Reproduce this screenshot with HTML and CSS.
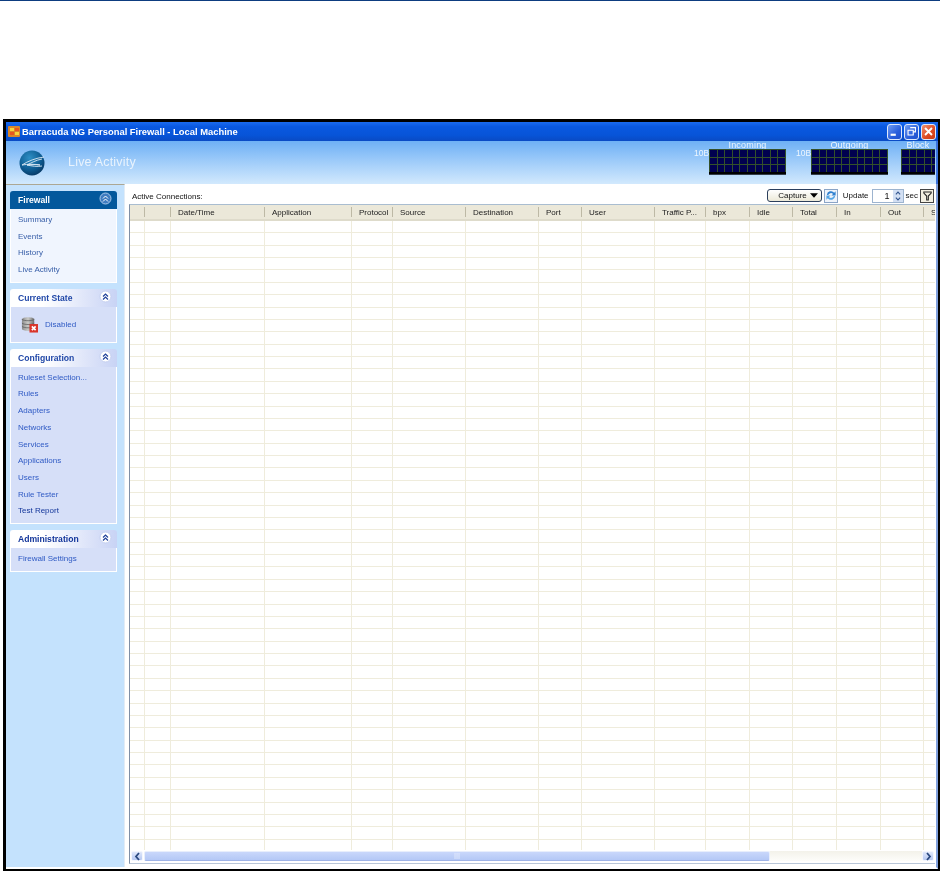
FILE: index.html
```html
<!DOCTYPE html>
<html lang="en">
<head>
<meta charset="utf-8">
<title>Barracuda NG Personal Firewall</title>
<link rel="stylesheet" href="styles.css">
</head>
<body>
<div class="topline"></div>
<div class="window">
  <div class="titlebar">
    <svg class="appicon" width="14" height="13" viewBox="0 0 14 13"><rect x="1" y="1" width="12" height="11" rx="1" fill="#d9862a"/><rect x="3" y="3" width="4" height="3" fill="#f6d33c"/><rect x="8" y="3" width="4" height="3" fill="#e7561f"/><rect x="3" y="7" width="4" height="3" fill="#e7561f"/><rect x="8" y="7" width="4" height="3" fill="#f6d33c"/></svg>
    <span class="title">Barracuda NG Personal Firewall - Local Machine</span>
    <div class="winbtns">
      <span class="winbtn"><svg width="15" height="15" viewBox="0 0 15 15"><rect x="3" y="10" width="6" height="2.5" fill="#fff"/></svg></span>
      <span class="winbtn"><svg width="15" height="15" viewBox="0 0 15 15"><path d="M6 3h6v5h-2M3.500 6h6v5.500h-6z" fill="none" stroke="#fff" stroke-width="1.300"/></svg></span>
      <span class="winbtn close"><svg width="15" height="15" viewBox="0 0 15 15"><path d="M3.500 3.500l8 8M11.500 3.500l-8 8" stroke="#fff" stroke-width="2.200"/></svg></span>
    </div>
  </div>
  <header class="banner">
    <svg class="logo" width="26" height="26" viewBox="0 0 26 26"><defs><radialGradient id="sph" cx="0.4" cy="0.3" r="0.8"><stop offset="0" stop-color="#2f8fc4"/><stop offset="0.6" stop-color="#0d5a90"/><stop offset="1" stop-color="#062f58"/></radialGradient></defs><circle cx="13" cy="13" r="12.500" fill="url(#sph)"/><path d="M25 7C17 8 9 11 3 15c6-1 12-1 18 0-5-1-9 0-13 0M23 9c-6 1-11 4-15 6 5 1 10 2 15 1" fill="none" stroke="#dbe9f4" stroke-width="0.900"/></svg>
    <h1 class="pagetitle">Live Activity</h1>
    <div class="monitors">
      <div class="monitor"><span class="ylabel">10B</span><div class="graphwrap"><span class="gtitle">Incoming</span><div class="graph w77"></div></div></div>
      <div class="monitor"><span class="ylabel">10B</span><div class="graphwrap"><span class="gtitle">Outgoing</span><div class="graph w77"></div></div></div>
      <div class="monitor block"><div class="graphwrap"><span class="gtitle">Block</span><div class="graph w34"></div></div></div>
    </div>
  </header>
  <div class="content">
    <aside class="sidebar">
      <section class="panel primary">
        <div class="phead"><span>Firewall</span><svg class="chev" width="13" height="13" viewBox="0 0 13 13"><circle cx="6.500" cy="6.500" r="5.500" fill="#3f7cc0" stroke="#a9c8ea"/><path d="M4 6.500l2.500-2.500 2.500 2.500M4 9.500l2.500-2.500 2.500 2.500" fill="none" stroke="#fff"/></svg></div>
        <ul class="pbody">
          <li>Summary</li><li>Events</li><li>History</li><li>Live Activity</li>
        </ul>
      </section>
      <section class="panel">
        <div class="phead"><span>Current State</span><svg class="chev" width="13" height="13" viewBox="0 0 13 13"><circle cx="6.500" cy="6.500" r="5.500" fill="#fff" stroke="#c4cff0"/><path d="M4 6.500l2.500-2.500 2.500 2.500M4 9.500l2.500-2.500 2.500 2.500" fill="none" stroke="#21429a" stroke-width="1.200"/></svg></div>
        <div class="pbody state">
          <svg width="17" height="17" viewBox="0 0 18 17"><defs><linearGradient id="db" x1="0" x2="1" y1="0" y2="0"><stop offset="0" stop-color="#8d8d8d"/><stop offset="0.5" stop-color="#c9c9c6"/><stop offset="1" stop-color="#6f6f6f"/></linearGradient></defs><path d="M1 3c0-3 13-3 13 0v10c0 3-13 3-13 0z" fill="url(#db)"/><path d="M1 3c2 2 11 2 13 0M1 7c2 2 11 2 13 0M1 10.500c2 2 11 2 13 0" fill="none" stroke="#5c5c5c" stroke-width="0.800"/><rect x="9" y="8" width="9" height="9" fill="#d9352a"/><path d="M11.500 10.500l4 4M15.500 10.500l-4 4" stroke="#fff" stroke-width="1.800"/></svg>
          <span>Disabled</span>
        </div>
      </section>
      <section class="panel">
        <div class="phead"><span>Configuration</span><svg class="chev" width="13" height="13" viewBox="0 0 13 13"><circle cx="6.500" cy="6.500" r="5.500" fill="#fff" stroke="#c4cff0"/><path d="M4 6.500l2.500-2.500 2.500 2.500M4 9.500l2.500-2.500 2.500 2.500" fill="none" stroke="#21429a" stroke-width="1.200"/></svg></div>
        <ul class="pbody">
          <li>Ruleset Selection...</li><li>Rules</li><li>Adapters</li><li>Networks</li><li>Services</li><li>Applications</li><li>Users</li><li>Rule Tester</li><li class="dark">Test Report</li>
        </ul>
      </section>
      <section class="panel">
        <div class="phead"><span class="dark">Administration</span><svg class="chev" width="13" height="13" viewBox="0 0 13 13"><circle cx="6.500" cy="6.500" r="5.500" fill="#fff" stroke="#c4cff0"/><path d="M4 6.500l2.500-2.500 2.500 2.500M4 9.500l2.500-2.500 2.500 2.500" fill="none" stroke="#21429a" stroke-width="1.200"/></svg></div>
        <ul class="pbody">
          <li>Firewall Settings</li>
        </ul>
      </section>
    </aside>
    <main class="main">
      <div class="toolbar">
        <span class="caption">Active Connections:</span>
        <div class="tools">
          <button class="capture">Capture<svg width="8" height="5" viewBox="0 0 9 5"><path d="M0 0h9L4.500 5z" fill="#000"/></svg></button>
          <span class="refresh"><svg width="13" height="13" viewBox="0 0 13 13"><path d="M2 6a4.500 4.500 0 0 1 8-2.500L11.500 2v4.500H7L8.700 5A3 3 0 0 0 3.500 6z" fill="#2f80d0"/><path d="M11 7a4.500 4.500 0 0 1-8 2.500L1.500 11V6.500H6L4.300 8A3 3 0 0 0 9.500 7z" fill="#54a5e6"/></svg></span>
          <span class="lbl">Update</span>
          <div class="spin"><span class="spinval">1</span><span class="spinbtns"><svg width="10" height="7" viewBox="0 0 10 7"><path d="M2.500 5L5 2.500 7.500 5" fill="none" stroke="#33558f" stroke-width="1.300"/></svg><svg width="10" height="7" viewBox="0 0 10 7"><path d="M2.500 2L5 4.500 7.500 2" fill="none" stroke="#33558f" stroke-width="1.300"/></svg></span></div>
          <span class="lbl">sec</span>
          <span class="filter"><svg width="9" height="10" viewBox="0 0 11 12"><path d="M1 1h9v1.500L6.500 6v5H4.500V6L1 2.500z" fill="none" stroke="#222" stroke-width="1.300"/></svg></span>
        </div>
      </div>
      <div class="grid">
        <div class="ghead">
          <div class="gh c1"></div><div class="gh c2"></div><div class="gh c3">Date/Time</div><div class="gh c4">Application</div><div class="gh c5">Protocol</div><div class="gh c6">Source</div><div class="gh c7">Destination</div><div class="gh c8">Port</div><div class="gh c9">User</div><div class="gh c10">Traffic P...</div><div class="gh c11">bpx</div><div class="gh c12">Idle</div><div class="gh c13">Total</div><div class="gh c14">In</div><div class="gh c15">Out</div><div class="gh c16">S</div>
        </div>
        <div class="gbody">
          <div class="gc c1"></div><div class="gc c2"></div><div class="gc c3"></div><div class="gc c4"></div><div class="gc c5"></div><div class="gc c6"></div><div class="gc c7"></div><div class="gc c8"></div><div class="gc c9"></div><div class="gc c10"></div><div class="gc c11"></div><div class="gc c12"></div><div class="gc c13"></div><div class="gc c14"></div><div class="gc c15"></div><div class="gc c16"></div>
        </div>
        <div class="hscroll">
          <span class="sbtn"><svg width="7" height="9" viewBox="0 0 7 9"><path d="M5 1L2 4.500 5 8" fill="none" stroke="#2b4a80" stroke-width="1.800"/></svg></span>
          <div class="thumb"><svg width="6" height="6" viewBox="0 0 6 6"><path d="M1 0v6M3 0v6M5 0v6" stroke="#eef2fd" stroke-width="0.700"/></svg></div>
          <div class="track"></div>
          <span class="sbtn"><svg width="7" height="9" viewBox="0 0 7 9"><path d="M2 1l3 3.500L2 8" fill="none" stroke="#2b4a80" stroke-width="1.800"/></svg></span>
        </div>
      </div>
    </main>
  </div>
</div>
</body>
</html>
```
FILE: styles.css
```css
* { box-sizing: border-box; }
html, body { margin: 0; padding: 0; background: #fff; }
body { width: 940px; height: 872px; overflow: hidden; font-family: "Liberation Sans", Arial, sans-serif; font-size: 9px; color: #111; }
.topline { height: 1px; background: #0d3d80; }
.window { margin: 118px 0 0 3px; width: 937px; height: 752px; border: solid #000; border-width: 3px 2px 2px 3px; display: flex; flex-direction: column; background: #fff; filter: blur(0.35px); overflow: hidden; }
.titlebar { height: 19px; flex: none; display: flex; align-items: center; background: linear-gradient(#1a6bef 0, #0a58e0 25%, #0754d8 70%, #0a4ac4 100%); padding: 0 2px 0 1px; }
.appicon { flex: none; }
.title { margin-left: 1px; color: #fff; font-weight: 700; font-size: 9.400px; white-space: nowrap; }
.winbtns { margin-left: auto; display: flex; gap: 2px; }
.winbtn { width: 15px; height: 16px; border: 1px solid #dfe9fb; border-radius: 3px; background: linear-gradient(135deg, #6f9cf2, #2a5fdc 60%, #2050cc); display: flex; align-items: center; justify-content: center; }
.winbtn.close { background: linear-gradient(135deg, #f09070, #dd4a22 60%, #c93a14); }
.banner { height: 43px; flex: none; display: flex; align-items: flex-start; background: linear-gradient(#6eb0f5, #a6d0fa 55%, #d2e9fd); border-right: 2px solid #3a72dc; }
.logo { margin: 9px 0 0 13px; flex: none; }
.pagetitle { margin: 15px 0 0 23px; font-size: 12.500px; font-weight: 400; color: #e9f3fd; letter-spacing: 0.2px; line-height: 13px; }
.monitors { margin-left: auto; display: flex; gap: 10px; justify-content: flex-end; padding-right: 1px; }
.monitor { display: flex; align-items: flex-start; }
.monitor.block { margin-left: 3px; }
.ylabel { font-size: 8.500px; color: #eef6fe; margin-top: 8px; width: 15px; line-height: 9px; white-space: nowrap; }
.graphwrap { display: flex; flex-direction: column; align-items: center; }
.gtitle { font-size: 9px; line-height: 8px; color: #eef6fe; height: 8px; letter-spacing: 0.2px; }
.graph { height: 26px; background-color: #00004f; background-image: linear-gradient(#000 0 0), repeating-linear-gradient(90deg, #33502a 0 1px, transparent 1px 7.600px), repeating-linear-gradient(#33502a 0 1px, transparent 1px 7.600px); background-size: 100% 2px, auto, auto; background-position: bottom, 0 0, 0 0; background-repeat: no-repeat, repeat, repeat; border-bottom: 1px solid #333c48; }
.w77 { width: 77px; }
.w34 { width: 34px; }
.content { flex: 1; display: flex; min-height: 0; border-bottom: 2px solid #fff; border-right: 2px solid #7f9fdc; }
.sidebar { width: 119px; flex: none; background: #c4e2fd; border-top: 1px solid #aca793; padding: 6px 8px 0 4px; display: flex; flex-direction: column; gap: 6px; border-right: 1px solid #e2ecf6; }
.panel { width: 107px; }
.phead { height: 18px; padding: 0 5px 0 8px; display: flex; align-items: center; justify-content: space-between; border-radius: 3px 3px 0 0; background: linear-gradient(90deg, #fff 30%, #c8d3f5); color: #2148a8; font-weight: 700; font-size: 8.600px; }
.primary .phead { background: #03589c; color: #fff; }
.chev { flex: none; margin-top: -3px; }
.pbody { margin: 0; padding: 3px 0 3px 7px; list-style: none; background: #d6dff8; border: 1px solid #fff; border-top: 0; color: #2f5ac4; font-size: 8px; }
.primary .pbody { background: #f0f5fe; color: #385fa8; }
.pbody li { height: 16.700px; line-height: 16.700px; white-space: nowrap; }
.dark { color: #12359a; }
.state { height: 36px; display: flex; align-items: center; padding: 0 0 0 10px; gap: 7px; }
.main { flex: 1; min-width: 0; background: #fff; padding: 3px 1px 0 4px; display: flex; flex-direction: column; }
.toolbar { height: 17px; flex: none; display: flex; align-items: center; justify-content: space-between; padding: 0 0 0 3px; }
.caption { font-size: 8px; margin-top: 1px; }
.tools { display: flex; align-items: center; gap: 2px; margin-right: 1px; }
.capture { width: 55px; height: 13px; padding: 0 3px 0 0; display: flex; align-items: center; justify-content: flex-end; gap: 3px; font: inherit; font-size: 8px; background: linear-gradient(#fff, #ece9d8); border: 1px solid #2c3f5c; border-radius: 3px; color: #111; }
.refresh { width: 14px; height: 14px; margin-right: 3px; display: flex; align-items: center; justify-content: center; border: 1px solid #8aa4c6; background: #eef3fa; }
.lbl { font-size: 8px; }
.spin { width: 32px; height: 14px; margin-left: 1px; display: flex; border: 1px solid #9db4cf; background: #fff; }
.spinval { flex: 1; text-align: right; padding-right: 3px; font-size: 9px; line-height: 12px; }
.spinbtns { width: 10px; display: flex; flex-direction: column; background: #d2dff3; }
.spinbtns svg { display: block; height: 6px; }
.filter { width: 14px; height: 14px; display: flex; align-items: center; justify-content: center; border: 1px solid #444; background: #f2efe2; }
.grid { width: 806px; height: 660px; border-left: 1px solid #7f8fa6; border-top: 1px solid #a9bdd0; border-bottom: 1px solid #b9c6d8; display: flex; flex-direction: column; padding-bottom: 2px; }
.ghead { height: 16px; flex: none; display: flex; background: #ebe8d9; border-bottom: 2px solid #dedbcb; overflow: hidden; }
.gh { flex: none; padding-left: 7px; font-size: 8px; line-height: 15px; color: #222; white-space: nowrap; position: relative; }
.gh + .gh::before { content: ""; position: absolute; left: -1px; top: 2px; height: 10px; width: 1px; background: #bdb9a5; }
.gbody { flex: 1; display: flex; background-color: #fff; background-image: repeating-linear-gradient(#fff 0 11.375px, #efecdc 11.375px 12.375px); overflow: hidden; }
.gc { flex: none; border-right: 1px solid #efecdc; }
.c1 { width: 15px; }
.c2 { width: 26px; }
.c3 { width: 94px; }
.c4 { width: 87px; }
.c5 { width: 41px; }
.c6 { width: 73px; }
.c7 { width: 73px; }
.c8 { width: 43px; }
.c9 { width: 73px; }
.c10 { width: 51px; }
.c11 { width: 44px; }
.c12 { width: 43px; }
.c13 { width: 44px; }
.c14 { width: 44px; }
.c15 { width: 43px; }
.c16 { width: 11px; border-right: 0; }
.hscroll { height: 11px; flex: none; display: flex; padding: 1px 1px 0; }
.sbtn { width: 12px; flex: none; display: flex; align-items: center; justify-content: center; background: linear-gradient(#e0e8fb, #b7c9f3); border: 1px solid #f3f6fe; border-radius: 2px; }
.thumb { width: 626px; flex: none; margin-left: 1px; display: flex; align-items: center; justify-content: center; background: linear-gradient(#c9d7fb, #b4c8f6); border: 1px solid #e8eefc; border-bottom-color: #9fb3e6; border-radius: 2px; }
.track { flex: 1; background: linear-gradient(#f3f2ea, #fdfdfa); }
```
